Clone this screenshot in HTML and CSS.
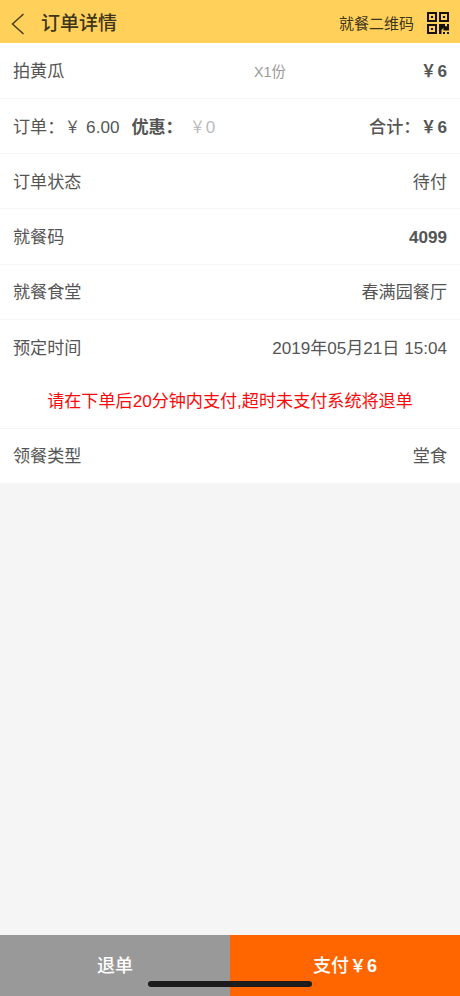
FILE: index.html
```html
<!DOCTYPE html>
<html lang="zh-CN">
<head>
<meta charset="utf-8">
<title>订单详情</title>
<link rel="stylesheet" href="styles.css">
</head>
<body>
<div class="page">
  <header class="header">
    <svg class="back" width="14" height="22" viewBox="0 0 14 22"><path d="M12.5 1 1.5 11l11 10" fill="none" stroke="#4a3d1c" stroke-width="1.5"/></svg>
    <h1 class="title">订单详情</h1>
    <span class="qr-label">就餐二维码</span>
    <svg class="qr" width="22" height="22" viewBox="0 0 22 22">
      <g fill="none" stroke="#17130a" stroke-width="2"><path d="M1 1h8v8H1zM13 1h8v8h-8zM1 13h8v8H1z"/></g>
      <path fill="#17130a" d="M3.9 3.9h2.2v2.2H3.9zM15.9 3.9h2.2v2.2h-2.2zM3.9 15.9h2.2v2.2H3.9zM12 12h6v2.2h2V12h2v6.5h-5.5V16l-2 2v4H12zM16 20h2v2h-2zM20 20h2v2h-2z"/>
    </svg>
  </header>
  <main class="list">
    <div class="row first"><span class="item">拍黄瓜</span><span class="count">X1份</span><b class="price"><span class="yen">￥</span>6</b></div>
    <div class="row"><span>订单：<span class="yen">￥</span> 6.00</span><b class="discount">优惠：</b><span class="muted"><span class="yen">￥</span>0</span><b class="end"><span class="medium">合计：</span><span class="yen">￥</span>6</b></div>
    <div class="row"><span>订单状态</span><span class="end">待付</span></div>
    <div class="row"><span>就餐码</span><b class="end">4099</b></div>
    <div class="row"><span>就餐食堂</span><span class="end">春满园餐厅</span></div>
    <div class="row plain"><span>预定时间</span><span class="end">2019年05月21日 15:04</span></div>
    <p class="notice">请在下单后20分钟内支付,超时未支付系统将退单</p>
    <div class="row plain last"><span>领餐类型</span><span class="end">堂食</span></div>
  </main>
  <footer class="actions">
    <button class="button cancel">退单</button>
    <button class="button pay">支付<b><span class="yen">￥</span>6</b></button>
    <span class="home-bar"></span>
  </footer>
</div>
</body>
</html>
```
FILE: styles.css
```css
* { box-sizing: border-box; }
body { margin: 0; background: #f5f5f5; color: #555; font: 17.1px/24px "Liberation Sans", "Noto Sans CJK SC", sans-serif; }
b { font-weight: 700; }
.page { display: flex; flex-direction: column; height: 996px; }
.header { display: flex; align-items: center; height: 43px; padding: 4px 11px 0; background: #ffd15b; color: #3f351d; }
.title { margin: 1px 0 0 16px; font-size: 19px; font-weight: 500; }
.qr-label { margin-left: auto; font-size: 15px; }
.qr { margin: -1px 0 0 13px; }
.list { background: #fff; }
.row { display: flex; align-items: center; height: 55.2px; padding: 3px 13px 0; border-bottom: 1px solid #f5f5f5; white-space: pre; }
.first { height: 56px; }
.plain { border-bottom: 0; }
.last { height: 54.6px; }
.item { width: 241px; }
.count { color: #999; font-size: 14.3px; }
.yen { display: inline-block; transform: scale(.88, .97); }
.medium { font-weight: 500; }
.end, .price { margin-left: auto; }
.discount { margin-left: 12px; }
.muted { margin-left: 6px; color: #bbb; }
.notice { height: 53.6px; margin: 0; padding-top: 15px; border-bottom: 1px solid #f5f5f5; color: #f90a0a; font-size: 17.1px; text-align: center; }
.actions { position: relative; display: flex; height: 61px; margin-top: auto; }
.button { flex: 1; border: 0; padding: 0; color: #fff; font: 500 18px/24px "Liberation Sans", "Noto Sans CJK SC", sans-serif; }
.cancel { background: #999; }
.pay { background: #ff6600; }
.home-bar { position: absolute; left: 148px; top: 46px; width: 164px; height: 6px; border-radius: 3px; background: #1c1c1c; }
```
